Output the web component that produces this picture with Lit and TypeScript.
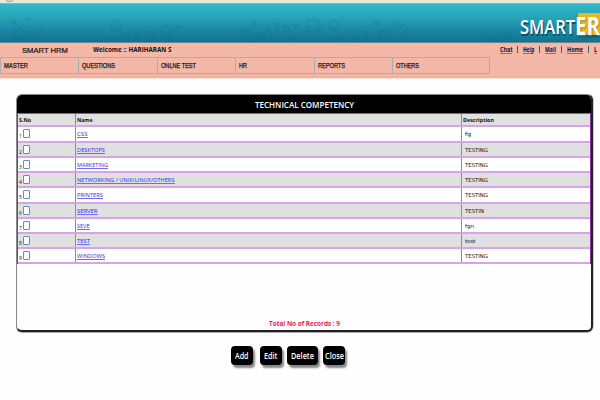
import { LitElement, html, css, svg } from "lit";
import { customElement, property } from "lit/decorators.js";

/** A single line of text, scaled horizontally to an exact width. */
@customElement("fit-text")
class FitText extends LitElement {
  @property({ type: Number }) width = 0;
  static styles = css`
    :host { display: block; white-space: nowrap; flex: none; }
    span { display: block; width: max-content; transform-origin: 0 50%; }
  `;
  render() {
    return html`<span><slot></slot></span>`;
  }
  firstUpdated() {
    const el = this.renderRoot.querySelector("span") as HTMLElement;
    this.style.width = `${this.width}px`;
    const natural = el.getBoundingClientRect().width;
    if (natural > 0) el.style.transform = `scaleX(${this.width / natural})`;
  }
}

const menu: [string, number][] = [
  ["MASTER", 24], ["QUESTIONS", 33], ["ONLNE TEST", 35], ["HR", 8], ["REPORTS", 27], ["OTHERS", 23],
];
const links: [string, number][] = [["Chat", 12.5], ["Help", 11.5], ["Mail", 11], ["Home", 16], ["L", 3]];
const records: [string, number, string, number][] = [
  ["CSS", 10.5, "fg", 6],
  ["DESKTOPS", 28, "TESTING", 23],
  ["MARKETING", 31, "TESTING", 23],
  ["NETWORKING / UNIX/LINUX/OTHERS", 97.5, "TESTING", 23],
  ["PRINTERS", 26, "TESTING", 23],
  ["SERVER", 20.5, "TESTIN", 19],
  ["SEVE", 12.5, "fgn", 9],
  ["TEST", 13, "test", 10.5],
  ["WINDOWS", 28, "TESTING", 23],
];
const gears: [number, number, number][] = [
  [14, 23, 3], [19, 35, 6], [31, 36, 4], [41, 32, 3], [28, 20, 2], [116, 27, 6], [111, 41, 3], [126, 38, 4],
  [137, 37, 4], [150, 37, 5], [166, 32, 6], [178, 29, 3], [241, 33, 3], [246, 30, 3], [253, 40, 5],
  [262, 37, 4], [255, 25, 3], [273, 29, 6], [286, 30, 4], [296, 26, 3], [313, 27, 8], [334, 26, 5],
  [290, 44, 6], [338, 44, 6], [354, 41, 4], [366, 35, 3], [365, 42, 4], [377, 24, 3], [385, 35, 6],
  [398, 26, 4], [407, 33, 4], [487, 39, 4], [497, 40, 5], [508, 37, 4],
];
const buttons: [string, number, number][] = [["Add", 22, 13.5], ["Edit", 22, 13.5], ["Delete", 31, 23], ["Close", 22, 19]];

@customElement("app-root")
class AppRoot extends LitElement {
  static styles = css`
    :host {
      display: flex; flex-direction: column; width: 600px; height: 400px; overflow: hidden;
      background: #fefefe; font-family: "Open Sans", "Noto Sans", sans-serif; color: #111;
    }
    .chrome { height: 3px; background: #ece8d9; border-bottom: 1px solid #9caaa0; overflow: hidden; }
    .knob { width: 7px; height: 5px; margin: -3px 0 0 6px; border: 1px solid #aaa; border-radius: 50%; background: #ddd; box-sizing: border-box; }
    .banner {
      position: relative; height: 38px; flex: none; border-bottom: 1px solid #69868b; overflow: hidden;
      background: linear-gradient(#30b8c8, #28a9bb 30%, #1d8ca8 62%, #117390);
    }
    .gears { display: block; width: 600px; height: 38px; }
    .logo {
      position: absolute; left: 519.5px; top: 9px; display: flex; color: #fff; white-space: nowrap;
      font: 600 20px/28px "Open Sans", sans-serif; text-shadow: 1px 2px 1px #0b4b5f;
    }
    .tile { position: absolute; left: 578px; top: 9px; width: 22px; height: 22px; background: #efb51c; box-shadow: 0 2px 2px #0b5266; }
    .logo .er { font-size: 25px; font-weight: 700; margin-top: -2px; text-shadow: 1px 1px 1px #8f7420; }
    .sub { height: 35px; flex: none; background: linear-gradient(#f4b8a8 32px, #f9b09b 33px); display: flex; flex-direction: column; border-bottom: 1px solid #fbe6df; }
    .info { height: 14px; flex: none; display: flex; align-items: center; overflow: hidden; }
    .app { margin-left: 22px; font: 7.5px/13px "Liberation Sans", sans-serif; -webkit-text-stroke: 0.2px #111; }
    .welcome { margin-left: 24.5px; font: bold 6.5px/12px "Open Sans", sans-serif; }
    .links { margin-left: 328.5px; display: flex; font: bold 6.5px/7px "Open Sans", sans-serif; color: #10103c; }
    .link { border-bottom: 1px solid #7468dc; height: 7px; margin-top: -1px; }
    .bar { width: 1px; height: 7px; margin: -1px 5.2px 0 4.8px; background: #555; flex: none; }
    .menu { display: grid; grid-template-columns: 78px 79px 78px 79px 78px 96px; width: 490px; height: 17px; flex: none; box-sizing: border-box; border: 1px solid #a7afb4; border-left-color: #b6abb0; }
    .item { border-right: 1px solid #a7afb4; padding-left: 3px; font: 7px/15px "Liberation Sans", sans-serif; -webkit-text-stroke: 0.25px #111; }
    .item:last-child { border-right: 0; }
    .panel {
      margin: 15px 0 0 16px; width: 577px; height: 238px; flex: none; box-sizing: border-box; overflow: hidden;
      border: 1px solid #888; border-right: 2px solid #222; border-bottom: 2px solid #222;
      border-radius: 6px; display: flex; flex-direction: column; background: #fefefe; box-shadow: 0 1px 0 #aaa, 1px 0 0 #ccc;
    }
    .title { height: 18px; flex: none; background: #000; color: #fff; display: flex; justify-content: center; font: 600 8px/20px "Open Sans", sans-serif; }
    .table { display: grid; grid-template-rows: 13px 16px 15px 15px 15px 16px 15px 15px 15px 15px; border-left: 1px solid #8535a0; border-right: 1px solid #8535a0; border-top: 1px solid #a344c1; flex: none; }
    .row { display: grid; grid-template-rows: minmax(0, 1fr); grid-template-columns: 58px 386px 1fr; border-bottom: 2px solid #d6a5e8; font-size: 6px; line-height: 10px; background: #fff; }
    .row:nth-child(odd) { background: #e0e0e0; }
    .head { font-weight: 700; }
    .cell { border-right: 1px solid #bd66d8; display: flex; align-items: center; padding-left: 1px; min-width: 0; }
    .cell:last-child { border-right: 0; padding-left: 3px; }
    .head .cell:last-child { padding-left: 1px; }
    .num { font-size: 5px; width: 4px; padding-top: 4px; }
    .check { width: 7px; height: 9px; box-sizing: border-box; border: 1px solid #6490ac; border-radius: 1px; background: #fafafa; margin-bottom: 1px; }
    .name { color: #2a2af0; border-bottom: 1px solid #6c6cf4; line-height: 6px; height: 6px; margin-top: 1px; }
    .desc { font-family: "DejaVu Sans", sans-serif; font-size: 5.5px; }
    .total { margin: auto 0 1px; display: flex; justify-content: center; height: 11px; font: bold 6.5px/11px "Open Sans", sans-serif; color: #f5144f; }
    .actions { display: flex; gap: 6px; margin: 14px 0 0 231px; }
    .btn { height: 19px; background: #000; color: #fff; border-radius: 4px; box-shadow: 2px 3px 2px #888; display: flex; justify-content: center; font: 600 8px/20px "Open Sans", sans-serif; }
    .btn:nth-child(2) { margin-left: 1px; }
    .btn:nth-child(3), .btn:last-child { margin-left: -1px; }
  `;

  render() {
    return html`
      <div class="chrome"><div class="knob"></div></div>
      <div class="banner">
        <svg class="gears" viewBox="0 0 600 38" fill="none" stroke="#10607f" stroke-opacity="0.13" stroke-width="2.4">
          ${gears.map(([x, y, r]) => svg`<circle cx=${x} cy=${y - 5} r=${r - 1}></circle>`)}
        </svg>
        <div class="tile"></div>
        <div class="logo"><fit-text width="55">SMART</fit-text><fit-text class="er" width="25">ER</fit-text></div>
      </div>
      <div class="sub">
        <div class="info">
          <fit-text class="app" width="46">SMART HRM</fit-text>
          <fit-text class="welcome" width="78.5">Welcome :: HARIHARAN S</fit-text>
          <div class="links">
            ${links.map(([t, w], i) => html`${i ? html`<i class="bar"></i>` : ""}<fit-text class="link" .width=${w}>${t}</fit-text>`)}
          </div>
        </div>
        <div class="menu">
          ${menu.map(([t, w]) => html`<div class="item"><fit-text .width=${w}>${t}</fit-text></div>`)}
        </div>
      </div>
      <div class="panel">
        <div class="title"><fit-text width="99">TECHNICAL COMPETENCY</fit-text></div>
        <div class="table">
          <div class="row head">
            <div class="cell"><fit-text width="12">S.No</fit-text></div>
            <div class="cell"><fit-text width="15.5">Name</fit-text></div>
            <div class="cell"><fit-text width="31">Description</fit-text></div>
          </div>
          ${records.map(([n, nw, d, dw], i) => html`
            <div class="row">
              <div class="cell"><span class="num">${i + 1}</span><span class="check"></span></div>
              <div class="cell"><fit-text class="name" .width=${nw}>${n}</fit-text></div>
              <div class="cell"><fit-text class="desc" .width=${dw}>${d}</fit-text></div>
            </div>`)}
        </div>
        <div class="total"><fit-text width="71">Total No of Records : 9</fit-text></div>
      </div>
      <div class="actions">
        ${buttons.map(([t, w, tw]) => html`<div class="btn" style="width:${w}px"><fit-text .width=${tw}>${t}</fit-text></div>`)}
      </div>
    `;
  }
}
